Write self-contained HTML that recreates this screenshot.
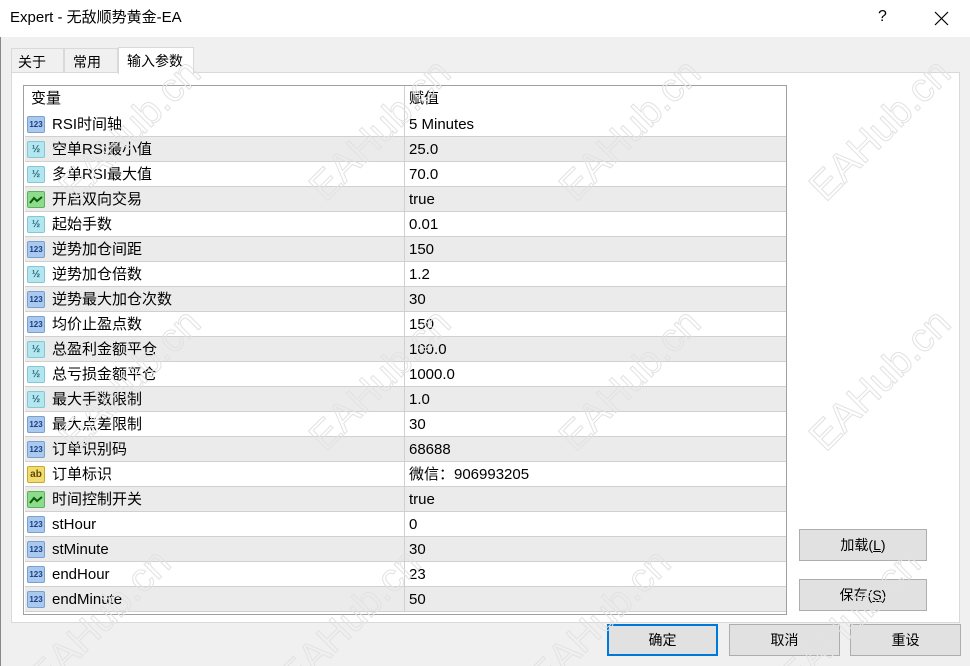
<!DOCTYPE html>
<html><head><meta charset="utf-8"><style>
*{margin:0;padding:0;box-sizing:border-box}
html,body{width:970px;height:666px;overflow:hidden}
body{background:#f0f0f0;font-family:"Liberation Sans","Noto Sans CJK SC",sans-serif;font-size:14px;color:#000;position:relative}
.abs{position:absolute}
.title{left:0;top:0;width:970px;height:37px;background:#fff}
.title span{position:absolute;left:10px;top:9px;font-size:15px;line-height:18px}
.tab{top:48px;height:25px;border:1px solid #d9d9d9;border-bottom:none;background:#f0f0f0;padding:5px 0 0 6px;font-size:14px;line-height:16px}
.panel{left:11px;top:72px;width:949px;height:551px;background:#fff;border:1px solid #d9d9d9}
.tbl{left:23px;top:85px;width:764px;height:530px;border:1px solid #a0a0a0;background:#fff;overflow:hidden}
.row{position:absolute;left:1px;width:761px;height:25px;border-bottom:1px solid #d0d0d0}
.row.g{background:#ebebeb}
.row .n,.row .v{position:absolute;top:4px;line-height:17px;height:17px;font-size:15px;white-space:nowrap}
.row .n{left:27px}
.row .v{left:384px}
.row .d{position:absolute;left:379px;top:0;width:1px;height:25px;background:#d0d0d0}
.ic{position:absolute;left:2px;top:4px;width:18px;height:17px;border-radius:2px;font-size:8px;font-weight:bold;text-align:center;line-height:16px;font-family:"Liberation Sans",sans-serif}
.i1{background:#a9c9ef;color:#1a3f86;border:1px solid #7aa0d0}
.i2{background:#b3e6ef;color:#226577;border:1px solid #82c8d6;font-size:10px}
.i3{background:#8cdc8c;border:1px solid #5cb05c}
.i4{background:#f2dc70;color:#604800;border:1px solid #c9a830;font-size:10px}
.btn{height:32px;border:1px solid #adadad;background:#e1e1e1;text-align:center;line-height:30px;font-size:14px}
.wm{position:absolute;font-size:40px;line-height:44px;color:transparent;-webkit-text-stroke:1px #e2e2e2;transform:rotate(-45deg);font-family:"Liberation Sans",sans-serif;white-space:nowrap}
</style></head><body>
<div class="abs title"><span>Expert - 无敌顺势黄金-EA</span>
<span style="left:878px;top:8px;font-size:16px">?</span>
<svg class="abs" style="left:934px;top:11px" width="15" height="15"><path d="M1 1L14 14M14 1L1 14" stroke="#000" stroke-width="1.2"/></svg></div>
<div class="abs" style="left:0;top:37px;width:1px;height:629px;background:#888"></div>
<div class="abs tab" style="left:11px;width:53px">关于</div>
<div class="abs tab" style="left:64px;width:54px;padding-left:8px">常用</div>
<div class="abs panel"></div>
<div class="abs tab" style="left:118px;top:47px;width:76px;height:27px;background:#fff;padding-left:8px">输入参数</div>
<div class="abs tbl" id="t">
<div class="row" style="top:0;height:26px;border-bottom:none"><span class="n" style="left:6px">变量</span><span class="v">赋值</span><span class="d" style="height:26px"></span></div>
</div>
<div class="abs btn" style="left:799px;top:529px;width:128px">加载(<u>L</u>)</div>
<div class="abs btn" style="left:799px;top:579px;width:128px">保存(<u>S</u>)</div>
<div class="abs btn" style="left:607px;top:624px;width:111px;border:2px solid #0078d7;line-height:28px">确定</div>
<div class="abs btn" style="left:729px;top:624px;width:111px">取消</div>
<div class="abs btn" style="left:850px;top:624px;width:111px">重设</div>
<script>
var d=[["1","RSI时间轴","5 Minutes"],["2","空单RSI最小值","25.0"],["2","多单RSI最大值","70.0"],["3","开启双向交易","true"],["2","起始手数","0.01"],["1","逆势加仓间距","150"],["2","逆势加仓倍数","1.2"],["1","逆势最大加仓次数","30"],["1","均价止盈点数","150"],["2","总盈利金额平仓","100.0"],["2","总亏损金额平仓","1000.0"],["2","最大手数限制","1.0"],["1","最大点差限制","30"],["1","订单识别码","68688"],["4","订单标识","微信：906993205"],["3","时间控制开关","true"],["1","stHour","0"],["1","stMinute","30"],["1","endHour","23"],["1","endMinute","50"]];
var h="",t={"1":"123","2":"½","3":"<svg width='14' height='10' style='margin-top:3px'><path d='M1 8L5 3L8 6L13 2' stroke='#0a5a0a' stroke-width='2' fill='none'/></svg>","4":"ab"};
d.forEach(function(r,i){h+='<div class="row'+(i%2?' g':'')+'" style="top:'+(26+i*25)+'px"><span class="ic i'+r[0]+'">'+t[r[0]]+'</span><span class="n">'+r[1]+'</span><span class="d"></span><span class="v">'+r[2]+'</span></div>'});
document.getElementById('t').innerHTML+=h;
var w="";[[40,130],[290,130],[540,130],[790,130],[40,380],[290,380],[540,380],[790,380],[10,620],[260,620],[510,620],[760,620]].forEach(function(p){w+='<div class="wm" style="left:'+p[0]+'px;top:'+(p[1]-22)+'px">EAHub.cn</div>'});
document.body.insertAdjacentHTML('beforeend',w);
</script>
</body></html>
